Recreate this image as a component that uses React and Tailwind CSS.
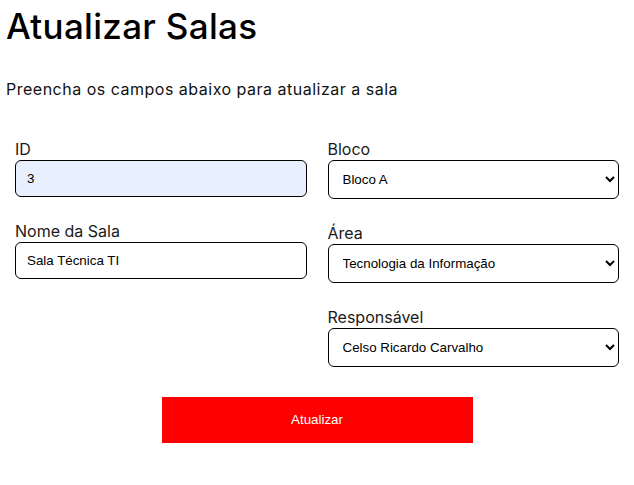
import React, { useState } from 'react';

const BLOCOS = ['Bloco A', 'Bloco B', 'Bloco C'];
const AREAS = ['Tecnologia da Informação', 'Administração', 'Manutenção'];
const RESPONSAVEIS = ['Celso Ricardo Carvalho', 'Ana Paula Souza', 'Marcos Lima'];

const labelCls = "block h-[21px] text-[16px] leading-[21px] text-[#1a1a1a]";
const inputCls = "block h-[37px] w-full rounded-[6px] border border-black px-[11px] font-['Liberation_Sans',Arial,sans-serif] text-[13.33px] text-black outline-none";
const selectCls = "block h-[39px] w-full rounded-[6px] border border-black bg-white pl-[10px] pr-[6px] font-['Liberation_Sans',Arial,sans-serif] text-[13.33px] text-black outline-none";

export default function App() {
  const [form, setForm] = useState({
    id: '3',
    nome: 'Sala Técnica TI',
    bloco: 'Bloco A',
    area: 'Tecnologia da Informação',
    responsavel: 'Celso Ricardo Carvalho',
  });

  const update = (e) => setForm((p) => ({ ...p, [e.target.name]: e.target.value }));

  return (
    <div className="min-h-[485px] bg-white px-[6px] font-['Inter',sans-serif] text-black">
      <h1 className="pt-[3px] text-[35px] font-medium leading-[46px] tracking-[0.3px]">Atualizar Salas</h1>
      <p className="mt-[30px] text-[16px] leading-[21px] tracking-[0.5px] text-[#111]">
        Preencha os campos abaixo para atualizar a sala
      </p>

      <form onSubmit={(e) => e.preventDefault()} className="mt-[39px] px-[9px]">
        <div className="grid grid-cols-2 gap-x-[21px]">
          {/* Left column */}
          <div className="flex flex-col gap-[24px]">
            <div>
              <label className={labelCls}>ID</label>
              <input name="id" value={form.id} onChange={update} className={inputCls + " bg-[#e8f0fe]"} />
            </div>
            <div>
              <label className={labelCls}>Nome da Sala</label>
              <input name="nome" value={form.nome} onChange={update} className={inputCls + " bg-white"} />
            </div>
          </div>

          {/* Right column */}
          <div className="flex flex-col gap-[24px]">
            <div>
              <label className={labelCls}>Bloco</label>
              <select name="bloco" value={form.bloco} onChange={update} className={selectCls}>
                {BLOCOS.map((b) => <option key={b} value={b}>{b}</option>)}
              </select>
            </div>
            <div>
              <label className={labelCls}>Área</label>
              <select name="area" value={form.area} onChange={update} className={selectCls}>
                {AREAS.map((a) => <option key={a} value={a}>{a}</option>)}
              </select>
            </div>
            <div>
              <label className={labelCls}>Responsável</label>
              <select name="responsavel" value={form.responsavel} onChange={update} className={selectCls}>
                {RESPONSAVEIS.map((r) => <option key={r} value={r}>{r}</option>)}
              </select>
            </div>
          </div>
        </div>

        <div className="mt-[30px] flex justify-center">
          <button
            type="submit"
            className="h-[46px] w-[311px] bg-[#ff0000] font-['Liberation_Sans',Arial,sans-serif] text-[13.33px] text-white"
          >
            Atualizar
          </button>
        </div>
      </form>
    </div>
  );
}
